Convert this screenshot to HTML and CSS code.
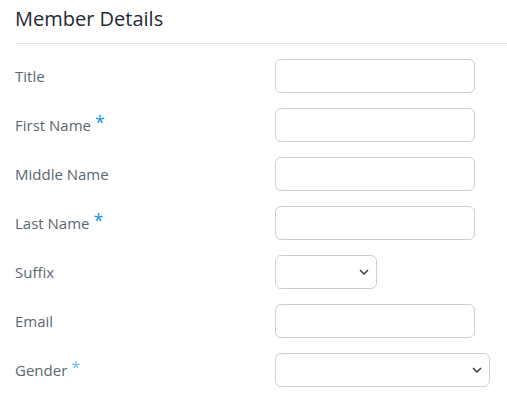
FILE: index.html
```html
<!DOCTYPE html>
<html lang="en">
<head>
    <meta charset="UTF-8">
    <meta name="viewport" content="width=device-width, initial-scale=1.0">
    <title>Member Details</title>
    <link rel="stylesheet" href="styles.css">
</head>
<body>
    <div class="panel">
        <h2 class="panel-title">Member Details</h2>

        <form class="member-form">
            <label class="field-label" for="title">Title</label>
            <input class="field-input" type="text" id="title">

            <label class="field-label" for="firstName">First Name&nbsp;<span class="req">*</span></label>
            <input class="field-input" type="text" id="firstName">

            <label class="field-label" for="middleName">Middle Name</label>
            <input class="field-input" type="text" id="middleName">

            <label class="field-label" for="lastName">Last Name&nbsp;<span class="req">*</span></label>
            <input class="field-input" type="text" id="lastName">

            <label class="field-label" for="suffix">Suffix</label>
            <div class="select-wrap small">
                <select class="field-select" id="suffix">
                    <option></option>
                    <option>Jr.</option>
                    <option>Sr.</option>
                </select>
                <svg class="chevron" width="10" height="6" viewBox="0 0 10 6"><path d="M1 1l4 4 4-4" fill="none" stroke="#333" stroke-width="1.4"/></svg>
            </div>

            <label class="field-label" for="email">Email</label>
            <input class="field-input" type="email" id="email">

            <label class="field-label" for="gender">Gender&nbsp;<span class="req light">*</span></label>
            <div class="select-wrap wide">
                <select class="field-select" id="gender">
                    <option></option>
                    <option>Female</option>
                    <option>Male</option>
                </select>
                <svg class="chevron" width="10" height="6" viewBox="0 0 10 6"><path d="M1 1l4 4 4-4" fill="none" stroke="#333" stroke-width="1.4"/></svg>
            </div>
        </form>
    </div>
</body>
</html>
```

FILE: styles.css
```css
body {
    margin: 0;
    background-color: #fff;
    font-family: "Open Sans", Arial, sans-serif;
}
.panel {
    padding-left: 15px;
}
.panel-title {
    margin: 0;
    padding-top: 5px;
    padding-bottom: 11px;
    font-size: 20px;
    line-height: 27px;
    font-weight: 400;
    color: #1f2a33;
    border-bottom: 1px solid #e3e3e3;
}
.member-form {
    display: grid;
    grid-template-columns: 260px auto;
    justify-content: start;
    row-gap: 15px;
    margin-top: 15px;
}
.field-label {
    display: flex;
    align-items: center;
    font-size: 15px;
    color: #5a6770;
}
.req {
    color: #1495e6;
    font-size: 18px;
    line-height: 1;
    align-self: flex-start;
    margin-top: 5px;
}
.req.light {
    color: #6cbcf0;
    font-size: 16px;
    margin-top: 6px;
}
.field-input,
.field-select {
    box-sizing: border-box;
    height: 34px;
    border: 1px solid #cfcfcf;
    border-radius: 6px;
    background-color: #fff;
    font-family: inherit;
    font-size: 14px;
    padding: 0 10px;
}
.field-input {
    width: 200px;
}
.select-wrap {
    position: relative;
}
.select-wrap.small {
    width: 102px;
}
.select-wrap.wide {
    width: 215px;
}
.field-select {
    width: 100%;
    appearance: none;
    -webkit-appearance: none;
}
.chevron {
    position: absolute;
    right: 8px;
    top: 14px;
    pointer-events: none;
}
```
